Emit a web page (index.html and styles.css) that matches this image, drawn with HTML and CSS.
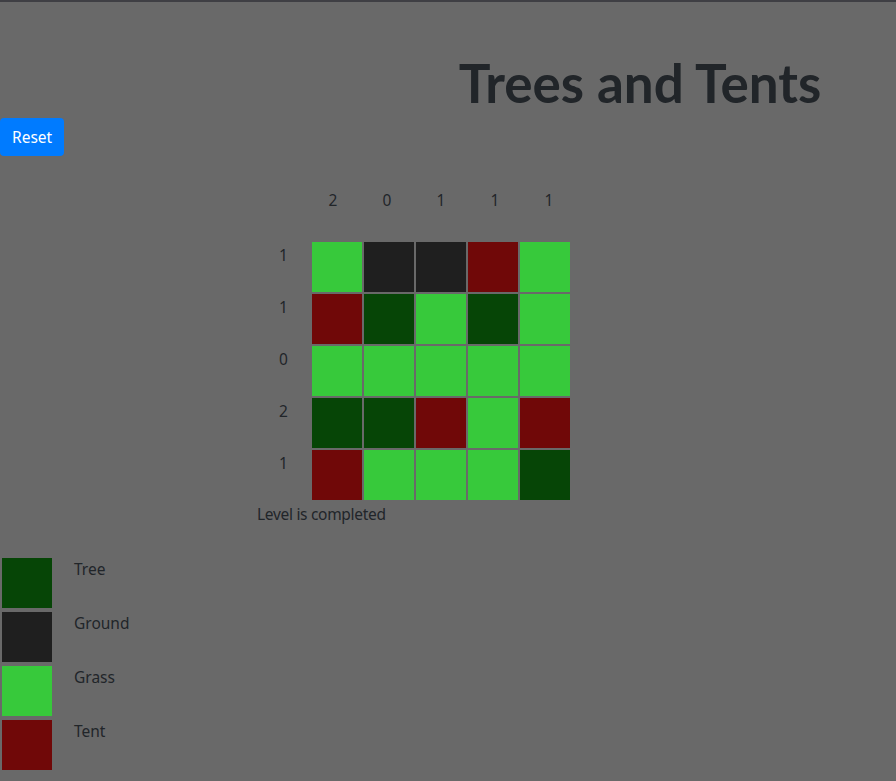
FILE: index.html
```html
<!DOCTYPE html>
<html>
<head>
<meta charset="utf-8">
<link rel="stylesheet" href="styles.css">
</head>
<body>
<div class="page">
  <header class="header">
    <h1 class="title">Trees and Tents</h1>
  </header>
  <button class="btn-reset">Reset</button>
  <section class="board">
    <div class="col-hints">
      <div class="hint">2</div>
      <div class="hint">0</div>
      <div class="hint">1</div>
      <div class="hint">1</div>
      <div class="hint">1</div>
    </div>
    <div class="row">
      <div class="row-hint">1</div>
      <div class="cell grass"></div><div class="cell ground"></div><div class="cell ground"></div><div class="cell tent"></div><div class="cell grass"></div>
    </div>
    <div class="row">
      <div class="row-hint">1</div>
      <div class="cell tent"></div><div class="cell tree"></div><div class="cell grass"></div><div class="cell tree"></div><div class="cell grass"></div>
    </div>
    <div class="row">
      <div class="row-hint">0</div>
      <div class="cell grass"></div><div class="cell grass"></div><div class="cell grass"></div><div class="cell grass"></div><div class="cell grass"></div>
    </div>
    <div class="row">
      <div class="row-hint">2</div>
      <div class="cell tree"></div><div class="cell tree"></div><div class="cell tent"></div><div class="cell grass"></div><div class="cell tent"></div>
    </div>
    <div class="row">
      <div class="row-hint">1</div>
      <div class="cell tent"></div><div class="cell grass"></div><div class="cell grass"></div><div class="cell grass"></div><div class="cell tree"></div>
    </div>
    <div class="status">Level is completed</div>
  </section>
  <section class="legend">
    <div class="legend-item"><div class="swatch tree"></div><span class="legend-label">Tree</span></div>
    <div class="legend-item"><div class="swatch ground"></div><span class="legend-label">Ground</span></div>
    <div class="legend-item"><div class="swatch grass"></div><span class="legend-label">Grass</span></div>
    <div class="legend-item"><div class="swatch tent"></div><span class="legend-label">Tent</span></div>
  </section>
</div>
</body>
</html>
```
FILE: styles.css
```css
html, body {
  margin: 0;
  padding: 0;
}
body {
  background: #696969;
  border-top: 2px solid #3f3f44;
  font-family: "Noto Sans", "Open Sans", sans-serif;
  font-size: 15.5px;
  line-height: 24px;
  color: #212529;
  min-height: 779px;
}
.header {
  padding-left: 384px;
  text-align: center;
}
.title {
  margin: 0;
  padding-top: 46px;
  font-family: Lato, "Noto Sans", sans-serif;
  font-size: 53px;
  line-height: 70px;
  font-weight: 700;
  color: #212529;
}
.btn-reset {
  display: block;
  margin-top: 0;
  background: #007bff;
  color: #fff;
  border: 0;
  border-radius: 4px;
  padding: 6px 12px;
  height: 38px;
  font-family: inherit;
  font-size: 15.5px;
  line-height: 24px;
}
.board {
  margin-left: 256px;
  margin-top: 32px;
}
.col-hints {
  display: flex;
  padding-left: 50px;
  height: 53px;
}
.hint {
  width: 54px;
  text-align: center;
}
.row {
  display: flex;
}
.row-hint {
  width: 55px;
  text-align: center;
  padding-top: 2px;
}
.cell {
  width: 50px;
  height: 50px;
  border: 1px solid #696969;
}
.tree { background: #064506; }
.ground { background: #1f1f1f; }
.grass { background: #37c93b; }
.tent { background: #700808; }
.status {
  padding-left: 1px;
  letter-spacing: -0.3px;
  padding-top: 1px;
}
.legend {
  margin-top: 30px;
  display: flex;
  flex-direction: column;
}
.legend-item {
  display: flex;
  align-items: flex-start;
}
.swatch {
  width: 50px;
  height: 50px;
  margin: 2px;
}
.legend-label {
  margin-left: 20px;
  line-height: 24px;
  padding-top: 1px;
}
```
